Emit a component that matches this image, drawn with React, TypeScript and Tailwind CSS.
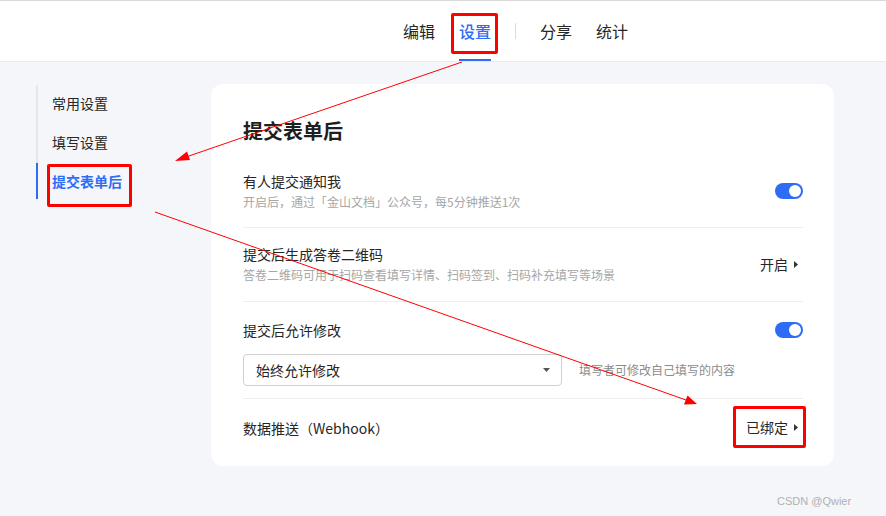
import React from "react";

function Toggle() {
  return (
    <div className="w-[28px] h-[16px] rounded-full bg-[#2f6cf6] flex items-center justify-end pr-[2px]">
      <div className="w-[12px] h-[12px] rounded-full bg-white" />
    </div>
  );
}

function RightLink({ label }: { label: string }) {
  return (
    <div className="flex items-center gap-[6px] pr-[5px] text-[14px] text-[#262626]">
      <span>{label}</span>
      <svg width="4" height="7" viewBox="0 0 4 7">
        <path d="M0 0 L4 3.5 L0 7 Z" fill="#333" />
      </svg>
    </div>
  );
}

export default function App() {
  return (
    <div className="relative w-[886px] h-[516px] overflow-hidden bg-[#f5f6fa] font-['Microsoft_YaHei','Noto_Sans_CJK_SC',sans-serif]">
      {/* Header */}
      <div className="h-[62px] bg-white border-t border-[#d9d9d9] border-b border-b-[#ebebeb] flex">
        <div className="ml-[403px] flex items-stretch gap-[24px] text-[16px] text-[#262626]">
          <div className="flex items-center pt-[2px] border-b-2 border-transparent">编辑</div>
          <div className="flex items-center pt-[2px] border-b-2 border-[#2f6cf6] text-[#2f6cf6] font-medium">设置</div>
          <div className="flex items-center">
            <div className="w-px h-[16px] bg-[#dcdcdc]" />
          </div>
          <div className="flex items-center pt-[2px] border-b-2 border-transparent">分享</div>
          <div className="flex items-center pt-[2px] border-b-2 border-transparent">统计</div>
        </div>
      </div>

      {/* Body */}
      <div className="flex">
        {/* Sidebar */}
        <div className="ml-[36px] mt-[23px] w-[175px]">
          <div className="border-l-2 border-[#e4e6eb] flex flex-col text-[14px] text-[#262626]">
            <div className="h-[36px] flex items-center pl-[14px]">常用设置</div>
            <div className="h-[42px] flex items-center pl-[14px]">填写设置</div>
            <div className="h-[36px] flex items-center pl-[14px] -ml-[2px] border-l-2 border-[#2f6cf6] text-[#2f6cf6] font-bold">
              提交表单后
            </div>
          </div>
        </div>

        {/* Card */}
        <div className="mt-[22px] w-[623px] h-[382px] bg-white rounded-[12px] pl-[32px] pr-[31px] pt-[34px]">
          <div className="text-[20px] leading-[26px] font-bold text-[#1f1f1f]">提交表单后</div>

          {/* Row 1 */}
          <div className="flex items-center justify-between pt-[27px] pb-[16px] border-b border-[#eeeeee]">
            <div>
              <div className="text-[14px] leading-[20px] text-[#262626]">有人提交通知我</div>
              <div className="mt-[2px] text-[12px] leading-[18px] text-[#a6a6a6]">
                开启后，通过「金山文档」公众号，每5分钟推送1次
              </div>
            </div>
            <Toggle />
          </div>

          {/* Row 2 */}
          <div className="flex items-center justify-between pt-[16px] pb-[17px] border-b border-[#eeeeee]">
            <div>
              <div className="text-[14px] leading-[20px] text-[#262626]">提交后生成答卷二维码</div>
              <div className="mt-[2px] text-[12px] leading-[18px] text-[#a6a6a6]">
                答卷二维码可用于扫码查看填写详情、扫码签到、扫码补充填写等场景
              </div>
            </div>
            <RightLink label="开启" />
          </div>

          {/* Row 3 */}
          <div className="pt-[18px] pb-[12px] border-b border-[#eeeeee]">
            <div className="flex items-center justify-between">
              <div className="text-[14px] leading-[20px] text-[#262626]">提交后允许修改</div>
              <Toggle />
            </div>
            <div className="mt-[14px] flex items-center gap-[17px]">
              <div className="w-[319px] h-[32px] border border-[#d0d0d0] rounded-[4px] flex items-center justify-between pl-[12px] pr-[11px]">
                <span className="text-[14px] text-[#262626]">始终允许修改</span>
                <svg width="7" height="4" viewBox="0 0 7 4">
                  <path d="M0 0 L7 0 L3.5 4 Z" fill="#555" />
                </svg>
              </div>
              <span className="text-[12px] text-[#8c8c8c]">填写者可修改自己填写的内容</span>
            </div>
          </div>

          {/* Row 4 */}
          <div className="flex items-center justify-between pt-[18px]">
            <div className="text-[14px] leading-[20px] text-[#262626]">数据推送（Webhook）</div>
            <RightLink label="已绑定" />
          </div>
        </div>
      </div>

      {/* Watermark */}
      <div className="absolute left-[777px] top-[493px] text-[11px] text-[#b0b0b0] font-['Liberation_Sans',sans-serif]">
        CSDN @Qwier
      </div>

      {/* Red annotations */}
      <div className="absolute left-[451px] top-[13px] w-[47px] h-[41px] border-[3px] border-[#ff0000] rounded-[2px]" />
      <div className="absolute left-[47px] top-[164px] w-[85px] h-[43px] border-[3px] border-[#ff0000] rounded-[2px]" />
      <div className="absolute left-[733px] top-[406px] w-[73px] h-[42px] border-[3px] border-[#ff0000] rounded-[2px]" />

      <svg className="absolute left-0 top-0 pointer-events-none" width="886" height="516" viewBox="0 0 886 516">
        <line x1="462" y1="62" x2="186" y2="157" stroke="#ff0000" strokeWidth="1" />
        <path d="M175 161 L187 151.5 L190 160 Z" fill="#ff0000" />
        <line x1="155" y1="212" x2="686" y2="400" stroke="#ff0000" strokeWidth="1" />
        <path d="M697 404 L684 404.5 L687.5 395.5 Z" fill="#ff0000" />
      </svg>
    </div>
  );
}
